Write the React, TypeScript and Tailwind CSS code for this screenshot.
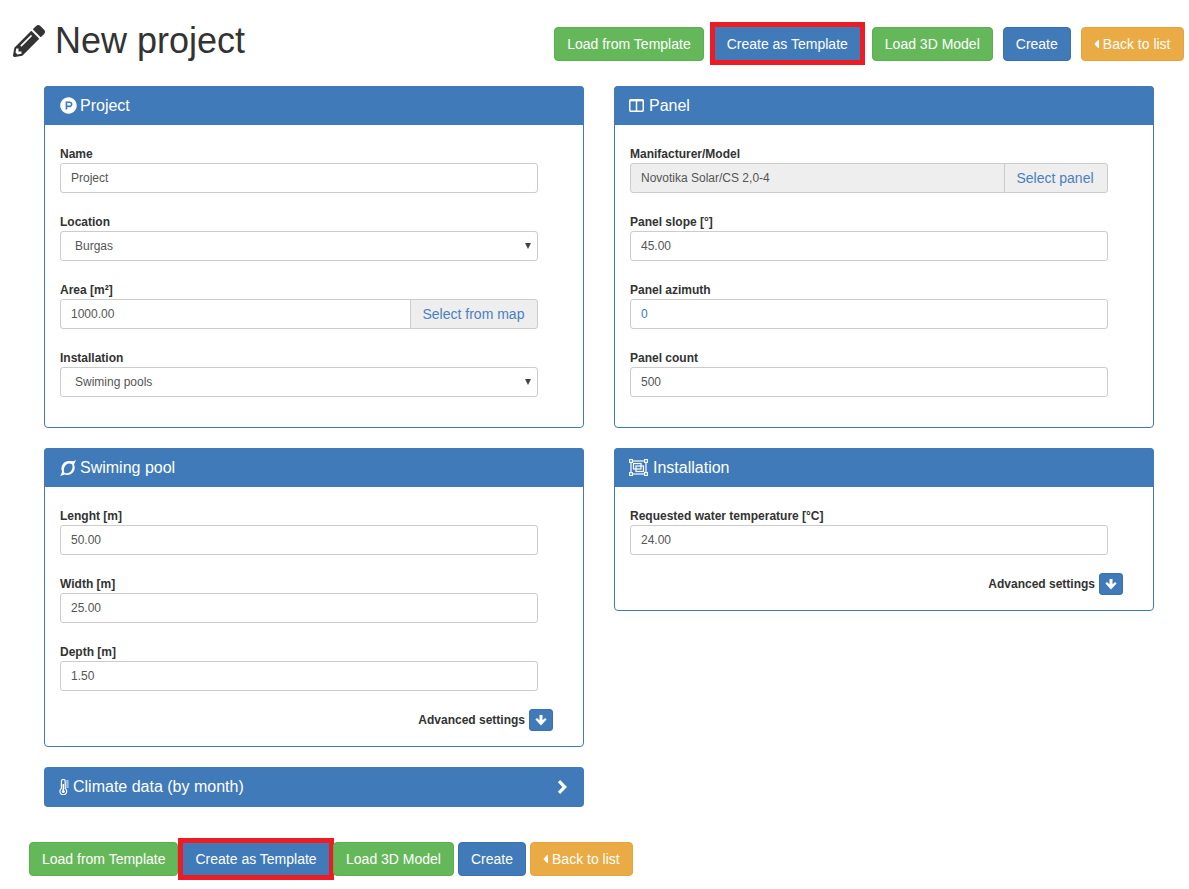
import type { ReactNode } from "react";
import { FaCaretLeft, FaPencilAlt, FaProductHunt } from "react-icons/fa";

const blue = "border-[#3a72ad] bg-[#407ab9]";
const green = "border-[#5cae50] bg-[#65b85a]";
const orange = "border-[#e5a43f] bg-[#ebab44]";

function Btn({ color, children }: { color: string; children: ReactNode }) {
  return (
    <button
      className={`flex h-[34px] items-center whitespace-nowrap rounded border px-3 text-[14px] text-white ${color}`}
    >
      {children}
    </button>
  );
}

function TemplateBtn({ height }: { height: string }) {
  return (
    <div className="border-[5px] border-[#ed1c24]">
      <button className={`flex items-center whitespace-nowrap bg-[#407ab9] px-3 text-[14px] text-white ${height}`}>
        Create as Template
      </button>
    </div>
  );
}

function BackBtn() {
  return (
    <Btn color={orange}>
      <FaCaretLeft className="h-[14px] w-[5px]" preserveAspectRatio="none" />
      <span className="ml-1">Back to list</span>
    </Btn>
  );
}

function PanelIcon() {
  return (
    <svg viewBox="0 0 15 13" className="mr-[5px] -ml-px h-[13px] w-[15px]" fill="none" stroke="white" strokeWidth="1.5">
      <rect x="0.75" y="0.75" width="13.5" height="11.5" rx="1" />
      <path d="M7.5 1v11" />
      <path d="M1 1.6h13" />
    </svg>
  );
}

function PoolIcon() {
  return (
    <svg viewBox="0 0 16 16" className="mr-1 h-[16px] w-[16px]" fill="white">
      <path
        fillRule="evenodd"
        d="M16 0 C14.5 1 13.5 1.2 12 1.3 C9.5 0.6 6.2 0.8 3.8 3 C1.2 5.4 1 8.8 2 11.2 C1.8 13 1.2 14.8 0 16 C1.8 15.6 3.4 15.2 4.8 14.6 C7.4 15.5 10.4 14.8 12.4 13 C15 10.6 15.2 7 14 4.4 C14.6 3 15.4 1.4 16 0 Z M12.2 4.6 C13 6.8 12.6 9.6 10.8 11.4 C9 13.2 6.4 13.6 4.4 12.8 C3.2 10.6 3.8 7.2 5.6 5.2 C7.4 3.2 10.4 2.8 12.2 4.6 Z"
      />
    </svg>
  );
}

function InstallIcon() {
  return (
    <svg viewBox="0 0 19 17" className="mr-[5px] -ml-px h-[17px] w-[19px]" fill="none" stroke="white" strokeWidth="1.2">
      <rect x="2" y="2" width="15" height="13" />
      <rect x="4.5" y="4.5" width="7.5" height="5.5" />
      <rect x="7" y="7" width="7.5" height="5.5" />
      <g fill="#407ab9" strokeWidth="1.1">
        <rect x="0.6" y="0.6" width="2.8" height="2.8" />
        <rect x="15.6" y="0.6" width="2.8" height="2.8" />
        <rect x="0.6" y="13.6" width="2.8" height="2.8" />
        <rect x="15.6" y="13.6" width="2.8" height="2.8" />
      </g>
    </svg>
  );
}

function ThermoIcon() {
  return (
    <svg viewBox="0 0 10 16" className="mr-1 -ml-px h-[16px] w-[10px]" fill="none" stroke="white" strokeWidth="1.2">
      <path d="M2.4 9.6V2.4a1.9 1.9 0 0 1 3.8 0v7.2a3.4 3.4 0 1 1-3.8 0Z" />
      <circle cx="4.3" cy="12.4" r="1.5" fill="white" stroke="none" />
      <path d="M4.3 12V5" strokeWidth="1.4" />
      <path d="M7.2 2h2.4M7.2 4h2.4M7.2 6h2.4M7.2 8h2.4" strokeWidth="1" />
    </svg>
  );
}

function Panel({ icon, title, children }: { icon: ReactNode; title: string; children: ReactNode }) {
  return (
    <section className="rounded border border-[#407ab9] bg-white">
      <header className="-m-px flex h-[39px] items-center rounded-t bg-[#407ab9] pl-4 text-[16px] text-white">
        {icon}
        <span>{title}</span>
      </header>
      {children}
    </section>
  );
}

function Field({ label, children }: { label: string; children: ReactNode }) {
  return (
    <div className="mb-5 w-[478px]">
      <label className="block h-[18px] text-[12px] leading-[18px] font-bold">{label}</label>
      {children}
    </div>
  );
}

function TextInput({ value, valueClass }: { value: string; valueClass?: string }) {
  return (
    <input
      readOnly
      value={value}
      className={`block h-[30px] w-full rounded-[3px] border border-[#ccc] bg-white px-[10px] text-[12px] ${valueClass ?? "text-[#555]"}`}
    />
  );
}

function SelectInput({ value }: { value: string }) {
  return (
    <div className="relative flex h-[30px] w-full items-center rounded-[3px] border border-[#ccc] bg-white pl-[14px] text-[12px] text-[#555]">
      {value}
      <span className="absolute top-[11px] right-[6px] h-0 w-0 border-x-[3.5px] border-t-[6px] border-x-transparent border-t-[#444]" />
    </div>
  );
}

function AddonInput({ value, addon, disabled, addonWidth }: { value: string; addon: string; disabled?: boolean; addonWidth: string }) {
  return (
    <div className="flex h-[30px] w-full text-[12px]">
      <div
        className={`flex min-w-0 flex-1 items-center rounded-l-[3px] border border-[#ccc] px-[10px] text-[#555] ${disabled ? "bg-[#eee]" : "bg-white"}`}
      >
        {value}
      </div>
      <div
        className={`-ml-px flex items-center rounded-r-[3px] border border-[#ccc] bg-[#eee] pl-[11.5px] text-[14px] text-[#4a80bd] ${addonWidth}`}
      >
        {addon}
      </div>
    </div>
  );
}

function Advanced() {
  return (
    <div className="-mt-[2px] mb-[15px] flex w-[493px] items-center justify-end gap-1 text-[12px] font-bold">
      <span>Advanced settings</span>
      <span className="flex h-[22px] w-[24px] items-center justify-center rounded-[3px] border border-[#3a72ad] bg-[#407ab9] text-white">
        <svg viewBox="0 0 12 11" className="h-[11px] w-[12px]" fill="white">
          <path d="M4.5 0h3v5.2L10 2.9l1.6 1.7L6 10.4.4 4.6 2 2.9l2.5 2.3Z" />
        </svg>
      </span>
    </div>
  );
}

export default function App() {
  return (
    <div className="min-h-[889px] w-[1189px] overflow-hidden bg-white font-['Liberation_Sans',Arial,sans-serif] text-[#333]">
      <div className="flex h-[86px] items-start justify-between pr-[5.5px] pl-[13px]">
        <h1 className="mt-[21px] flex h-[40px] items-center gap-[10px] text-[36px] font-normal">
          <FaPencilAlt className="h-[32px] w-[32px]" />
          New project
        </h1>
        <div className="mt-[22px] flex items-start">
          <div className="mt-[5px]">
            <Btn color={green}>Load from Template</Btn>
          </div>
          <div className="ml-[6px]">
            <TemplateBtn height="h-[33px] pt-px" />
          </div>
          <div className="mt-[5px] ml-[7px] flex gap-[10px]">
            <Btn color={green}>Load 3D Model</Btn>
            <Btn color={blue}>Create</Btn>
            <BackBtn />
          </div>
        </div>
      </div>

      <div className="ml-[44px] flex w-[1110px] items-start gap-[30px]">
        <div className="flex w-[540px] flex-col gap-5">
          <Panel icon={<FaProductHunt className="mr-[3px] h-[17px] w-[17px]" />} title="Project">
            <div className="px-[15px] pt-[21px] pb-[10px]">
              <Field label="Name">
                <TextInput value="Project" />
              </Field>
              <Field label="Location">
                <SelectInput value="Burgas" />
              </Field>
              <Field label="Area [m²]">
                <AddonInput value="1000.00" addon="Select from map" addonWidth="w-[128px]" />
              </Field>
              <Field label="Installation">
                <SelectInput value="Swiming pools" />
              </Field>
            </div>
          </Panel>

          <Panel icon={<PoolIcon />} title="Swiming pool">
            <div className="px-[15px] pt-[21px]">
              <Field label="Lenght [m]">
                <TextInput value="50.00" />
              </Field>
              <Field label="Width [m]">
                <TextInput value="25.00" />
              </Field>
              <Field label="Depth [m]">
                <TextInput value="1.50" />
              </Field>
              <Advanced />
            </div>
          </Panel>

          <div className="flex h-[40px] items-center justify-between rounded bg-[#407ab9] pr-[17px] pl-4 text-[16px] text-white">
            <span className="flex items-center">
              <ThermoIcon />
              Climate data (by month)
            </span>
            <svg viewBox="0 0 10 14" className="h-[14px] w-[10px]" fill="none" stroke="white" strokeWidth="3.2">
              <path d="M2 1.2 7.8 7 2 12.8" />
            </svg>
          </div>
        </div>

        <div className="flex w-[540px] flex-col gap-5">
          <Panel icon={<PanelIcon />} title="Panel">
            <div className="px-[15px] pt-[21px] pb-[10px]">
              <Field label="Manifacturer/Model">
                <AddonInput value="Novotika Solar/CS 2,0-4" addon="Select panel" disabled addonWidth="w-[104px]" />
              </Field>
              <Field label="Panel slope [°]">
                <TextInput value="45.00" />
              </Field>
              <Field label="Panel azimuth">
                <TextInput value="0" valueClass="text-[#337ab7]" />
              </Field>
              <Field label="Panel count">
                <TextInput value="500" />
              </Field>
            </div>
          </Panel>

          <Panel icon={<InstallIcon />} title="Installation">
            <div className="px-[15px] pt-[21px]">
              <Field label="Requested water temperature [°C]">
                <TextInput value="24.00" />
              </Field>
              <Advanced />
            </div>
          </Panel>
        </div>
      </div>

      <div className="mt-[31px] ml-[29px] flex items-center">
        <Btn color={green}>Load from Template</Btn>
        <TemplateBtn height="h-[32px]" />
        <div className="-ml-[0.6px] flex gap-1">
          <Btn color={green}>Load 3D Model</Btn>
          <Btn color={blue}>Create</Btn>
          <BackBtn />
        </div>
      </div>
    </div>
  );
}
